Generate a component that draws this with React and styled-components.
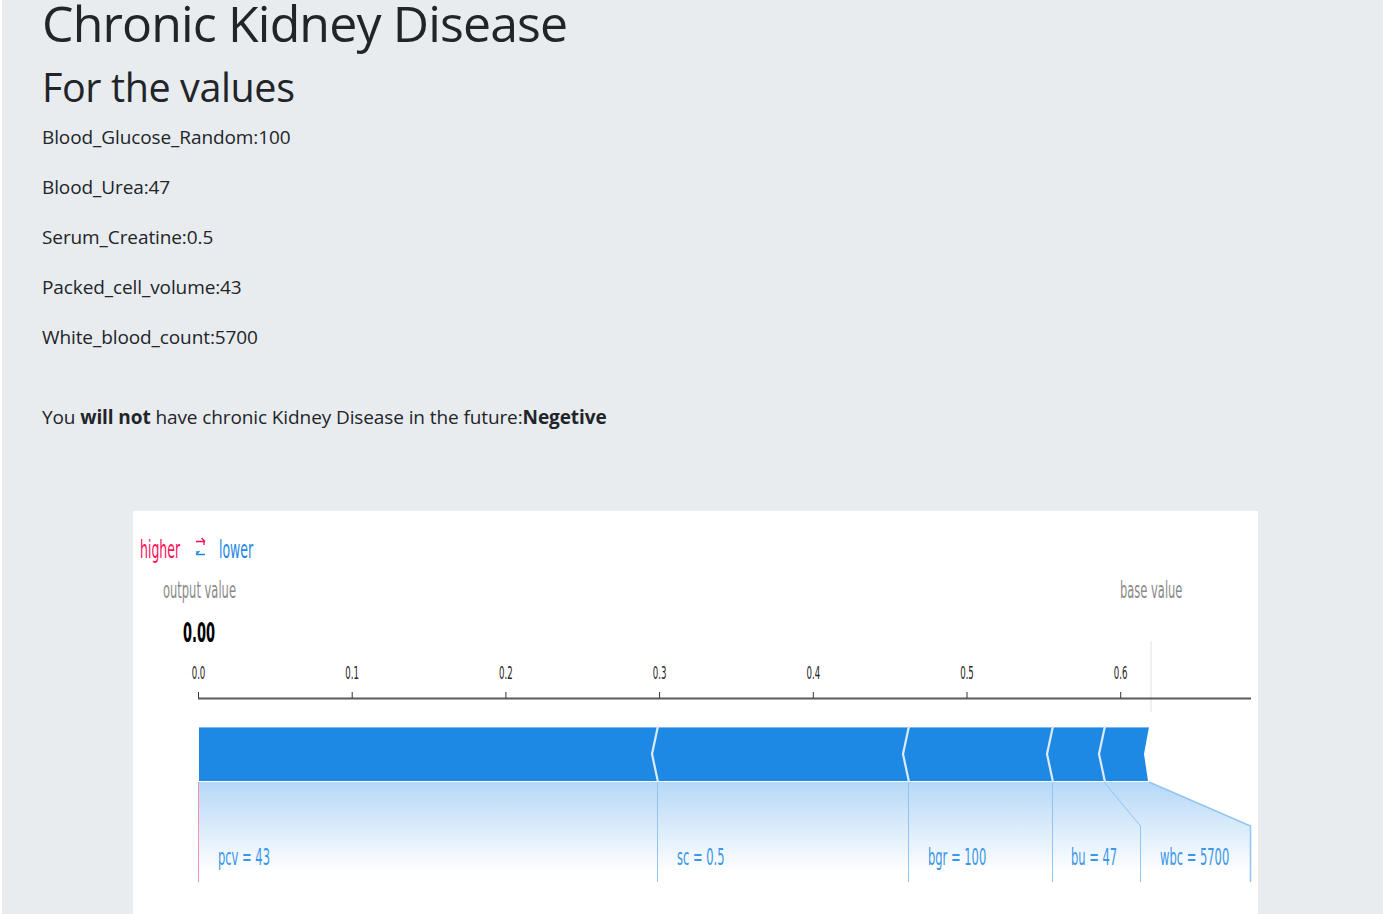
import React from "react";
import styled, { createGlobalStyle } from "styled-components";

const Global = createGlobalStyle`
  html, body { margin: 0; padding: 0; background: #fff; }
  body { font-family: "Open Sans", "Noto Sans", sans-serif; color: #212529; }
`;

const Jumbo = styled.div`
  margin-left: 2px;
  background: #e9ecef;
  padding: 0 40px;
  min-height: 914px;
  overflow: hidden;
  box-sizing: border-box;
`;

const Title = styled.h1`
  font-size: 50px;
  font-weight: 500;
  line-height: 60px;
  margin: -7px 0 10px;
  letter-spacing: -0.85px;
`;

const Subtitle = styled.h2`
  font-size: 39.5px;
  font-weight: 500;
  line-height: 48px;
  margin: 0 0 11px;
  letter-spacing: -0.4px;
`;

const Line = styled.p`
  font-size: 19px;
  line-height: 30px;
  margin: 0 0 ${(p) => p.$gap || 20}px;
  letter-spacing: -0.1px;
`;

const ChartCard = styled.div`
  margin: 79px 0 0 91px;
  width: 1125px;
  height: 440px;
  background: #fff;
`;

const ChartSvg = styled.svg`
  display: block;
`;

const SText = styled.text`
  font-family: "DejaVu Sans", sans-serif;
  font-size: ${(p) => p.$size}px;
  font-weight: ${(p) => (p.$bold ? 700 : 400)};
  fill: ${(p) => p.$color};
`;

function T({ x, y, size = 11.5, sy = 2, color = "#888", bold, anchor = "start", children }) {
  return (
    <g transform={`translate(${x} ${y}) scale(1 ${sy})`}>
      <SText x="0" y="0" $size={size} $color={color} $bold={bold} textAnchor={anchor}>
        {children}
      </SText>
    </g>
  );
}

const BLUE = "#1e88e5";
const PINK = "#ff0d57";
const ticks = [
  ["0.0", 198.5],
  ["0.1", 352.2],
  ["0.2", 505.9],
  ["0.3", 659.6],
  ["0.4", 813.3],
  ["0.5", 967],
  ["0.6", 1120.7],
];
const seps = [657, 908, 1052, 1104];
const labels = [
  ["pcv = 43", 218],
  ["sc = 0.5", 677],
  ["bgr = 100", 928],
  ["bu = 47", 1071],
  ["wbc = 5700", 1160],
];

function ForcePlot() {
  return (
    <ChartSvg width="1125" height="440" viewBox="133 511 1125 440">
      <defs>
        <linearGradient id="fade" x1="0" y1="0" x2="0" y2="1">
          <stop offset="0" stopColor={BLUE} stopOpacity="0.33" />
          <stop offset="0.9" stopColor={BLUE} stopOpacity="0" />
        </linearGradient>
      </defs>

      <T x={140} y={558} size={12.5} sy={2} color={PINK}>higher</T>
      <path d="M196 541.5 H205 M201.5 538 L205 541.5 M204 541.5 V545" stroke={PINK} strokeWidth="1.3" fill="none" />
      <path d="M205 554.5 H196 M199.5 551 L196 554.5 M197 554.5 V551" stroke={BLUE} strokeWidth="1.3" fill="none" />
      <T x={219} y={558} size={12.5} sy={2} color={BLUE}>lower</T>

      <T x={163} y={598} size={11.5} sy={2} color="#8a8a8a">output value</T>
      <T x={1120} y={598} size={11.5} sy={2} color="#8a8a8a">base value</T>
      <T x={183} y={642} size={13} sy={2.05} color="#000" bold>0.00</T>

      {ticks.map(([l, x]) => (
        <T key={l} x={x} y={679} size={8.6} sy={2} color="#222" anchor="middle">{l}</T>
      ))}
      <line x1="1151" y1="641" x2="1151" y2="712" stroke="#e2e2e2" strokeWidth="1" />
      <line x1="198" y1="698.5" x2="1251" y2="698.5" stroke="#5a5a5a" strokeWidth="2" />
      {ticks.map(([l, x]) => (
        <line key={l} x1={x} y1="692" x2={x} y2="698" stroke="#333" strokeWidth="1" />
      ))}

      <polygon points="199,782 1149,782 1251,826 1251,882 199,882" fill="url(#fade)" />
      <polygon points="199,727 1149,727 1144,754 1148,781 199,781" fill={BLUE} />
      <line x1="199" y1="727.5" x2="1149" y2="727.5" stroke="#7fb8ee" strokeWidth="1" />
      {seps.map((x) => (
        <polyline key={x} points={`${x + 1},726 ${x - 5},754 ${x + 1},782`} stroke="#dcecfb" strokeWidth="2.2" fill="none" />
      ))}

      <line x1="198.5" y1="782" x2="198.5" y2="882" stroke="#ff8fb0" strokeWidth="1" />
      {[657, 908, 1052].map((x) => (
        <line key={x} x1={x + 0.5} y1="782" x2={x + 0.5} y2="882" stroke="#93c4f1" strokeWidth="1" />
      ))}
      <polyline points="1104,782 1140.5,826 1140.5,882" stroke="#93c4f1" strokeWidth="1" fill="none" />
      <polyline points="1149,782 1250.5,826 1250.5,882" stroke="#93c4f1" strokeWidth="1.5" fill="none" />

      {labels.map(([l, x]) => (
        <T key={l} x={x} y={865} size={11.5} sy={1.95} color="#3a96e8">{l}</T>
      ))}
    </ChartSvg>
  );
}

export default function App() {
  return (
    <>
      <Global />
      <Jumbo>
        <Title>Chronic Kidney Disease</Title>
        <Subtitle>For the values</Subtitle>
        <Line>Blood_Glucose_Random:100</Line>
        <Line>Blood_Urea:47</Line>
        <Line>Serum_Creatine:0.5</Line>
        <Line>Packed_cell_volume:43</Line>
        <Line $gap={50}>White_blood_count:5700</Line>
        <Line>
          You <b>will not</b> have chronic Kidney Disease in the future:<b>Negetive</b>
        </Line>
        <ChartCard>
          <ForcePlot />
        </ChartCard>
      </Jumbo>
    </>
  );
}
